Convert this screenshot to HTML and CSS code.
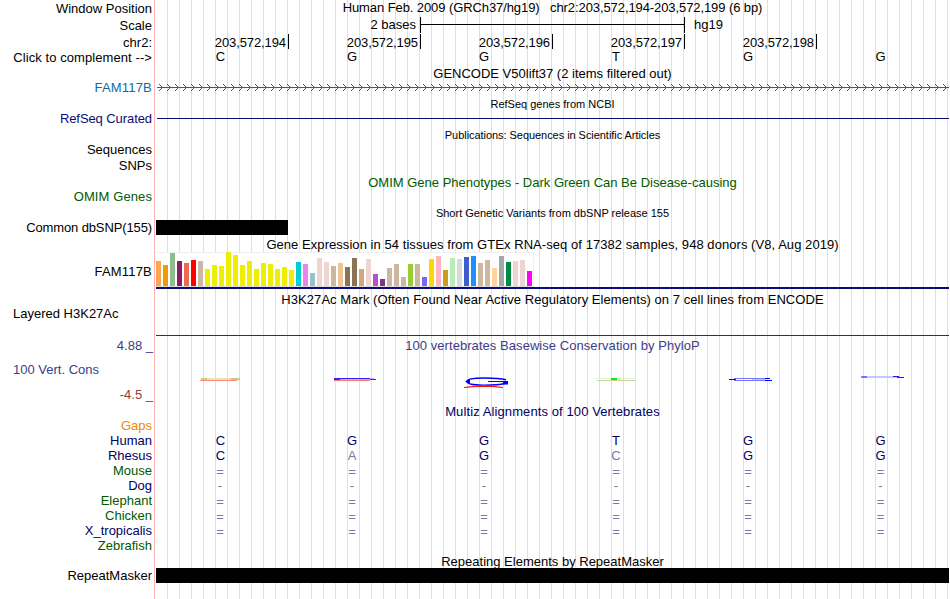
FILE: index.html
```
<!DOCTYPE html>
<html lang="en">
<head>
    <meta charset="UTF-8">
    <meta name="viewport" content="width=device-width, initial-scale=1.0">
    <title>chr2:203,572,194-203,572,199</title>
    <link rel="stylesheet" href="styles.css">
</head>
<body>
<div class="browser">
    <!-- ruler -->
    <div class="row position">
        <div class="label low">Window Position</div>
        <div class="data title position-title">Human Feb. 2009 (GRCh37/hg19)&nbsp;&nbsp; chr2:203,572,194-203,572,199 (6 bp)</div>
    </div>
    <div class="row scale">
        <div class="label low">Scale</div>
        <div class="data">
            <div class="scale-left">2 bases</div>
            <div class="scale-bar"><i></i></div>
            <div class="scale-right">hg19</div>
        </div>
    </div>
    <div class="row chrom">
        <div class="label">chr2:</div>
        <div class="data">
            <span>203,572,194</span><span>203,572,195</span><span>203,572,196</span><span>203,572,197</span><span>203,572,198</span>
        </div>
    </div>
    <div class="row complement">
        <div class="label">Click to complement --&gt;</div>
        <div class="data bases"><span>C</span><span>G</span><span>G</span><span>T</span><span>G</span><span>G</span></div>
    </div>

    <!-- genes -->
    <div class="row head-first"><div class="data title">GENCODE V50lift37 (2 items filtered out)</div></div>
    <div class="row item">
        <div class="label gene">FAM117B</div>
        <div class="data">
            <svg class="strand" width="793" height="15" shape-rendering="crispEdges">
                <defs>
                    <pattern id="arrows" x="3" width="8" height="15" patternUnits="userSpaceOnUse">
                        <path d="M0 4h1v1h-1zM1 5h1v1h-1zM2 6h1v1h-1zM3 7h1v1h-1zM2 8h1v1h-1zM1 9h1v1h-1zM0 10h1v1h-1z" fill="#0c6ca8"/>
                    </pattern>
                </defs>
                <rect x="1" width="792" height="15" fill="url(#arrows)"/>
                <rect x="1" y="7" width="792" height="1" fill="#0c6ca8"/>
            </svg>
        </div>
    </div>
    <div class="row head small"><div class="data title">RefSeq genes from NCBI</div></div>
    <div class="row item">
        <div class="label refseq">RefSeq Curated</div>
        <div class="data"><div class="refseq-line"></div></div>
    </div>

    <!-- publications -->
    <div class="row head small"><div class="data title pubs">Publications: Sequences in Scientific Articles</div></div>
    <div class="row sequences"><div class="label">Sequences</div></div>
    <div class="row item"><div class="label">SNPs</div></div>
    <div class="row head"><div class="data title omim">OMIM Gene Phenotypes - Dark Green Can Be Disease-causing</div></div>
    <div class="row item"><div class="label omim omim-label">OMIM Genes</div></div>

    <!-- variants -->
    <div class="row head small"><div class="data title">Short Genetic Variants from dbSNP release 155</div></div>
    <div class="row item">
        <div class="label dbsnp">Common dbSNP(155)</div>
        <div class="data"><div class="block snp"></div></div>
    </div>

    <!-- expression -->
    <div class="row head"><div class="data title gtex-title">Gene Expression in 54 tissues from GTEx RNA-seq of 17382 samples, 948 donors (V8, Aug 2019)</div></div>
    <div class="row gtex">
        <div class="label">FAM117B</div>
        <div class="data">
            <div class="bars" id="bars"></div>
            <div class="gene-model"></div>
        </div>
    </div>

    <!-- regulation -->
    <div class="row head"><div class="data title h3k-title">H3K27Ac Mark (Often Found Near Active Regulatory Elements) on 7 cell lines from ENCODE</div></div>
    <div class="row h3k">
        <div class="label left">Layered H3K27Ac</div>
        <div class="data"></div>
    </div>

    <!-- conservation -->
    <div class="row cons">
        <div class="label">
            <div class="limit">4.88 _</div>
            <div class="left">100 Vert. Cons</div>
            <div class="limit min">-4.5 _</div>
        </div>
        <div class="data">
            <div class="title phylop">100 vertebrates Basewise Conservation by PhyloP</div>
            <svg class="logo" width="793" height="30" viewBox="156 365 793 30" fill="none">
                <!-- C over A -->
                <path d="M201 379H239" stroke="#e4e4b4" stroke-width="2"/>
                <path d="M201 379H207M231 379H240" stroke="#b4b43c" stroke-width="1.2"/>
                <path d="M200 380.5H237" stroke="#ff8c78"/>
                <!-- G over A -->
                <path d="M334 379H374" stroke="#b4b4ff" stroke-width="2"/>
                <path d="M334 379H340" stroke="#2828f0" stroke-width="2"/>
                <path d="M340 378.5H370M370 379.5H376" stroke="#2828f0"/>
                <path d="M334 380.5H370" stroke="#ff7878"/>
                <!-- tall G over A -->
                <path d="M506 379.8C498 377.8 467 376.5 467 381.5C467 386.5 496 385.5 505 383.5" stroke="#0000ff" stroke-width="1.5"/>
                <path d="M465 381.5L470 379V384ZM488 381H508V384.5H503V382H488Z" fill="#0000ff"/>
                <path d="M464 387.5C472 387 478 385.5 484 385.5S495 387 503 387.5M473 386.5H493" stroke="#ff1414" stroke-width="1.2"/>
                <!-- T over C -->
                <path d="M595 378.5H634" stroke="#d2fad2"/>
                <path d="M597 380.5H636" stroke="#d2d29b"/>
                <path d="M611 379H617" stroke="#00f500" stroke-width="2"/>
                <!-- single G -->
                <path d="M734 378.5H768M734 380.5H769" stroke="#7878f5"/>
                <path d="M729 379.5H736M765 380.5H772M765 378.5H770" stroke="#0000ff"/>
                <path d="M752 379.5H766" stroke="#c8c8ff"/>
                <path d="M862 377H900" stroke="#b4b4ff" stroke-width="1.4"/>
                <path d="M861 377H867M893 376.5H899M897 377.5H904" stroke="#1e1eff"/>
            </svg>
            <div class="title multiz">Multiz Alignments of 100 Vertebrates</div>
        </div>
    </div>

    <!-- alignment -->
    <div class="row item"><div class="label gaps">Gaps</div></div>
    <div class="row item">
        <div class="label navy">Human</div>
        <div class="data bases navy"><span>C</span><span>G</span><span>G</span><span>T</span><span>G</span><span>G</span></div>
    </div>
    <div class="row item">
        <div class="label navy">Rhesus</div>
        <div class="data bases navy"><span>C</span><span class="diff">A</span><span>G</span><span class="diff">C</span><span>G</span><span>G</span></div>
    </div>
    <div class="row item">
        <div class="label green">Mouse</div>
        <div class="data bases gap"><span>=</span><span>=</span><span>=</span><span>=</span><span>=</span><span>=</span></div>
    </div>
    <div class="row item">
        <div class="label navy">Dog</div>
        <div class="data bases gap dash"><span>-</span><span>-</span><span>-</span><span>-</span><span>-</span><span>-</span></div>
    </div>
    <div class="row item">
        <div class="label green">Elephant</div>
        <div class="data bases gap"><span>=</span><span>=</span><span>=</span><span>=</span><span>=</span><span>=</span></div>
    </div>
    <div class="row item">
        <div class="label green">Chicken</div>
        <div class="data bases gap"><span>=</span><span>=</span><span>=</span><span>=</span><span>=</span><span>=</span></div>
    </div>
    <div class="row item">
        <div class="label navy">X_tropicalis</div>
        <div class="data bases gap"><span>=</span><span>=</span><span>=</span><span>=</span><span>=</span><span>=</span></div>
    </div>
    <div class="row item"><div class="label green">Zebrafish</div></div>

    <!-- repeats -->
    <div class="row head-last"><div class="data title">Repeating Elements by RepeatMasker</div></div>
    <div class="row item">
        <div class="label">RepeatMasker</div>
        <div class="data"><div class="block"></div></div>
    </div>
</div>
<script src="script.js"></script>
</body>
</html>
```
FILE: styles.css
```
body {
    margin: 0;
    background: #fff;
    color: #000;
    font-family: "Liberation Sans", Arial, sans-serif;
    font-size: 13px;
    line-height: 15px;
}
/* guide lines every 12px, red line between labels and tracks */
.browser {
    width: 949px;
    height: 599px;
    overflow: hidden;
    background:
        linear-gradient(#ffb4b4, #ffb4b4) 154px 0 / 1px 100% no-repeat,
        repeating-linear-gradient(to right, transparent 0 11px, #dcdcf8 11px 12px) 156px 0 / 793px 100% no-repeat;
}
.row {
    display: flex;
    white-space: nowrap;
}
.label {
    width: 152px;
    flex: none;
    margin-right: 4px;
    text-align: right;
}
.data {
    width: 793px;
    flex: none;
}
.title {
    text-align: center;
}
.low {
    padding-top: 1px;
}
.position, .scale, .complement {
    height: 17px;
}
.item {
    height: 15px;
}
.sequences {
    height: 16px;
}
.head, .head-first, .head-last {
    box-sizing: border-box;
    padding-left: 156px;
}
.head {
    height: 16px;
    padding-top: 2px;
}
.head-first {
    height: 14px;
}
.head-last {
    height: 15px;
    padding-top: 1px;
}
.small {
    padding-top: 3px;
    font-size: 11px;
    line-height: 13px;
}

/* ruler */
.position-title {
    letter-spacing: -0.09px;
}
.scale .data {
    display: flex;
}
.scale-left {
    width: 260px;
    margin-right: 4px;
    text-align: right;
}
.scale-bar {
    width: 263px;
    height: 16px;
    border-left: 1px solid #000;
    border-right: 1px solid #000;
}
.scale-bar i {
    display: block;
    height: 1px;
    margin-top: 7px;
    background: #000;
}
.scale-right {
    margin-left: 9px;
}
.chrom {
    height: 15px;
}
.chrom .label {
    padding-top: 1px;
}
.chrom .data {
    display: flex;
    padding-left: 1px;
    box-sizing: border-box;
}
.chrom span {
    width: 132px;
    height: 15px;
    box-sizing: border-box;
    padding: 1px 2px 0 0;
    border-right: 1px solid #000;
    text-align: right;
    letter-spacing: -0.1px;
}
.complement .label {
    padding-top: 1px;
    letter-spacing: 0.08px;
}
.bases {
    display: grid;
    grid-template-columns: repeat(6, 132px);
    margin-left: -2px;
    text-align: center;
}
.bases span:first-child, .bases span:last-child {
    margin-right: -1px;
}
.gap span:first-child {
    margin-right: 0;
}

/* tracks */
.gene {
    color: #0c6ca8;
}
.gene, .gtex .label {
    letter-spacing: 0.2px;
}
.refseq {
    color: #0c0c78;
    letter-spacing: -0.08px;
}
.pubs {
    letter-spacing: -0.05px;
}
.omim, .green {
    color: #005a00;
}
.omim-label {
    letter-spacing: 0.1px;
}
.dbsnp {
    letter-spacing: -0.12px;
}
.strand {
    display: block;
}
.refseq-line {
    height: 1px;
    margin: 7px 0 0 1px;
    background: #0c0c78;
}
.block {
    height: 15px;
    background: #000;
}
.snp {
    width: 132px;
}
.gtex-title, .h3k-title, .phylop {
    letter-spacing: 0.055px;
}
.gtex {
    height: 39px;
}
.gtex .label {
    padding-top: 13px;
}
.bars {
    display: flex;
    align-items: flex-end;
    gap: 2px;
    width: 378px;
    height: 35px;
    margin-top: 1px;
    box-sizing: border-box;
    border-top: 1px solid #f0f0f0;
    border-right: 1px solid #f0f0f0;
    border-bottom: 1px solid #dcdcdc;
    background: #fff;
}
.bars i {
    width: 5px;
    flex: none;
}
.gene-model {
    height: 2px;
    background: #0c0c78;
}
.h3k {
    height: 30px;
}
.h3k .data {
    box-sizing: border-box;
    border-bottom: 1px solid #1e3c50;
}
.left {
    text-align: left;
    text-indent: 13px;
}
.cons {
    height: 82px;
    color: #3c3c8c;
}
.cons .label {
    display: flex;
    flex-direction: column;
    padding-top: 2px;
}
.cons .left {
    margin: 9px 0 10px;
}
.limit {
    margin-right: -1px;
}
.min {
    color: #8c3c3c;
}
.cons .data {
    padding-top: 2px;
}
.logo {
    display: block;
    margin-top: 12px;
}
.multiz {
    margin-top: 9px;
    letter-spacing: 0.1px;
}
.multiz, .navy {
    color: #000064;
}
.gaps {
    color: #e68c00;
}
.gap, .diff {
    color: #7878aa;
}
.gap {
    padding-top: 1px;
}
.dash {
    padding-top: 0;
}
```
FILE: script.js
```
// [height, colour] per GTEx tissue
const tissues = [
    [25, '#ffa54f'], [21, '#ee9a00'], [33, '#8fbc8f'], [25, '#8b1c62'], [23, '#ee6a50'], [26, '#ff0000'],
    [25, '#cdb79e'], [17, '#eeee00'], [21, '#eeee00'], [20, '#eeee00'], [34, '#eeee00'], [31, '#eeee00'],
    [21, '#eeee00'], [25, '#eeee00'], [17, '#eeee00'], [23, '#eeee00'], [22, '#eeee00'], [17, '#eeee00'],
    [19, '#eeee00'], [16, '#eeee00'], [24, '#00cdcd'], [22, '#ee82ee'], [13, '#9ac0cd'], [28, '#eed5d2'],
    [24, '#eed5d2'], [20, '#cdb79e'], [23, '#eec591'], [19, '#8b7355'], [28, '#8b7355'], [17, '#cdaa7d'],
    [27, '#eed5d2'], [12, '#b452cd'], [7, '#7a378b'], [18, '#cdb79e'], [22, '#cdb79e'], [9, '#cdb79e'],
    [22, '#9acd32'], [22, '#cdb79e'], [9, '#7a67ee'], [27, '#ffd700'], [30, '#ffb6c1'], [16, '#cd9b1d'],
    [28, '#b4eeb4'], [27, '#d9d9d9'], [29, '#3a5fcd'], [30, '#1e90ff'], [23, '#cdb79e'], [26, '#cdb79e'],
    [18, '#ffd39b'], [30, '#a6a6a6'], [24, '#008b45'], [25, '#eed5d2'], [26, '#eed5d2'], [15, '#ff00ff']
];
document.getElementById('bars').innerHTML = tissues
    .map(([h, c]) => `<i style="height:${h}px;background:${c}"></i>`)
    .join('');
```
